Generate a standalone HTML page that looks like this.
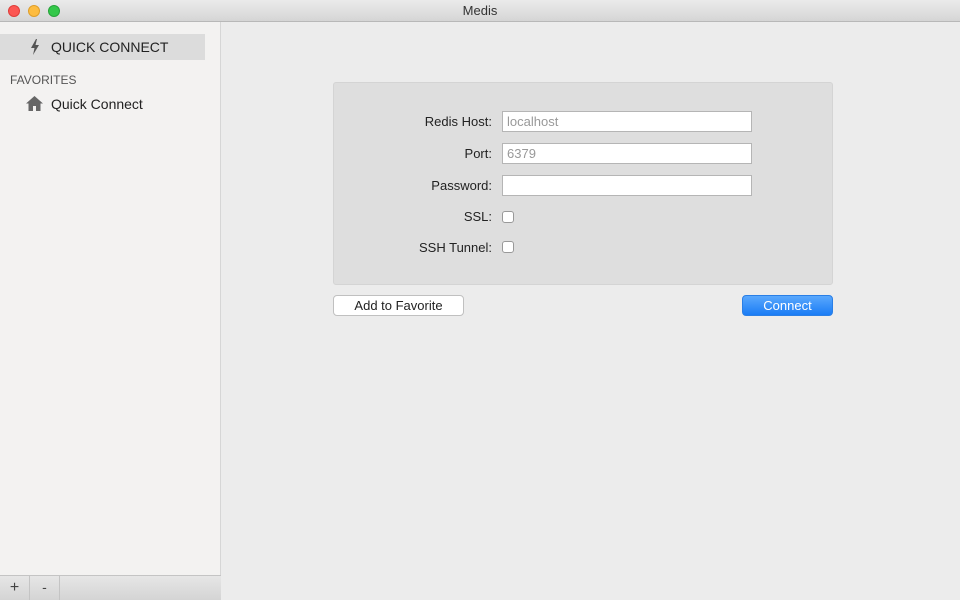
<!DOCTYPE html>
<html><head><style>
*{margin:0;padding:0;box-sizing:border-box}
body{width:960px;height:600px;overflow:hidden;font-family:"Liberation Sans",sans-serif;background:#ececec;position:relative;font-size:13px;color:#222}
.title{position:absolute;left:0;top:0;width:960px;height:22px;background:linear-gradient(#ebebeb,#d5d5d5);border-bottom:1px solid #b8b8b8;text-align:center;line-height:22px;font-size:13px;color:#333}
.dot{position:absolute;top:5px;width:12px;height:12px;border-radius:50%}
.side{position:absolute;left:0;top:22px;width:221px;height:578px;background:#f3f2f1;border-right:1px solid #d6d6d6}
.sel{position:absolute;left:0;top:12px;width:205px;height:26px;background:#dcdcdc}
.abs{position:absolute}
.bottom{position:absolute;left:0;top:575px;width:221px;height:25px;background:linear-gradient(#e6e6e6,#d4d4d4);border-top:1px solid #c4c4c4}
.panel{position:absolute;left:333px;top:82px;width:500px;height:203px;background:#dedede;border:1px solid #d4d4d4;border-radius:3px}
.lbl{position:absolute;right:468px;text-align:right;font-size:13px;color:#222}
.inp{position:absolute;left:502px;width:250px;height:21px;background:#fff;border:1px solid #b5b5b5;color:#999;font-size:13px;line-height:19px;padding-left:4px}
.cb{position:absolute;left:502px;width:12px;height:12px;background:#fff;border:1px solid #999;border-radius:3px}
.btn{position:absolute;top:295px;height:21px;border-radius:4px;text-align:center;line-height:20px;font-size:13px}
</style></head><body>
<div class="title">Medis
<div class="dot" style="left:8px;background:#fc5753;border:1px solid #df3e3a"></div>
<div class="dot" style="left:28px;background:#fdbc40;border:1px solid #de9e2a"></div>
<div class="dot" style="left:48px;background:#34c84a;border:1px solid #27a33a"></div>
</div>
<div class="side">
<div class="sel"></div>
<svg class="abs" style="left:30px;top:17px" width="10" height="16" viewBox="0 0 10 16"><path d="M6 0L1 9h3.5L3 16l6-10H5.5L7 0z" fill="#555"/></svg>
<div class="abs" style="left:51px;top:17px;font-size:14px;color:#222">QUICK CONNECT</div>
<div class="abs" style="left:10px;top:51px;font-size:12px;color:#555">FAVORITES</div>
<svg class="abs" style="left:26px;top:74px" width="17" height="15" viewBox="0 0 17 15"><path d="M8.5 0L0 7.5h2.5V15h4.5v-5h3v5h4.5V7.5H17z" fill="#666"/></svg>
<div class="abs" style="left:51px;top:74px;font-size:14px;color:#222">Quick Connect</div>
</div>
<div class="bottom">
<div class="abs" style="left:0;top:0;width:30px;height:24px;border-right:1px solid #c4c4c4;text-align:center;line-height:24px;font-size:16px;color:#444">+</div>
<div class="abs" style="left:30px;top:0;width:30px;height:24px;border-right:1px solid #c4c4c4;text-align:center;line-height:22px;font-size:14px;color:#444">-</div>
</div>
<div class="panel"></div>
<div class="lbl" style="top:114px">Redis Host:</div>
<div class="inp" style="top:111px">localhost</div>
<div class="lbl" style="top:146px">Port:</div>
<div class="inp" style="top:143px">6379</div>
<div class="lbl" style="top:178px">Password:</div>
<div class="inp" style="top:175px"></div>
<div class="lbl" style="top:209px">SSL:</div>
<div class="cb" style="top:211px"></div>
<div class="lbl" style="top:240px">SSH Tunnel:</div>
<div class="cb" style="top:241px"></div>
<div class="btn" style="left:333px;width:131px;background:#fff;border:1px solid #c0c0c0;color:#222">Add to Favorite</div>
<div class="btn" style="left:742px;width:91px;background:linear-gradient(#5aa8fd,#1a7cf5);border:1px solid #2a7fe6;color:#fff">Connect</div>
</body></html>
